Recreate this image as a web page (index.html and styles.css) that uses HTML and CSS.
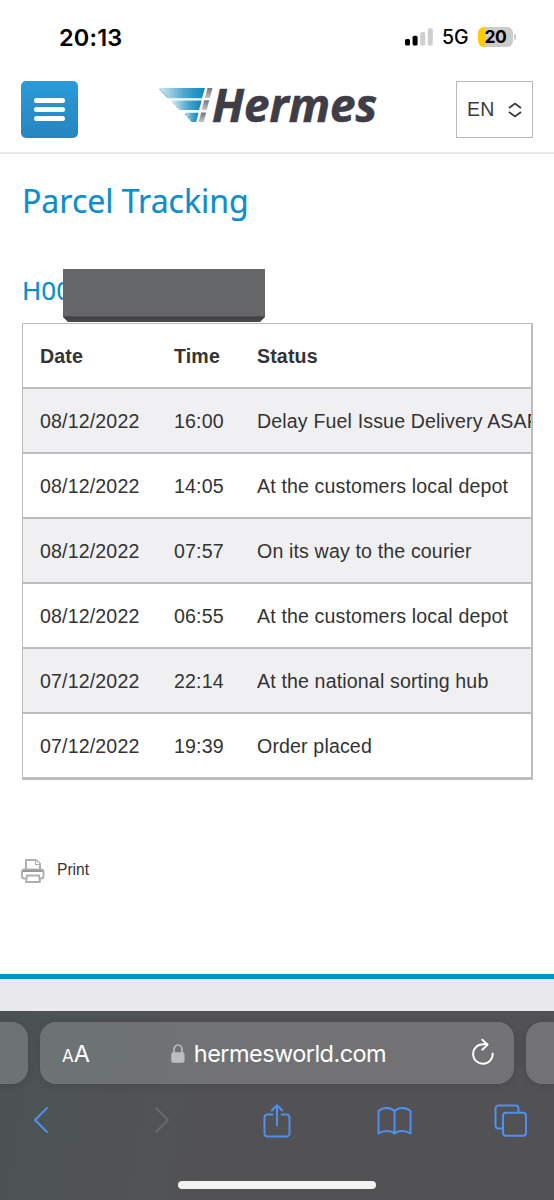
FILE: index.html
```html
<!DOCTYPE html>
<html lang="en">

<head>
    <meta charset="UTF-8">
    <meta name="viewport" content="width=device-width, initial-scale=1.0">
    <title>Parcel Tracking</title>
    <link rel="stylesheet" href="styles.css">
</head>

<body>
    <div class="status-bar">
        <span class="clock">20:13</span>
        <div class="status-right">
            <svg class="signal" width="28" height="18" viewBox="0 0 28 18">
                <rect x="0" y="11" width="5" height="6.5" rx="1.5" fill="#000" />
                <rect x="7.6" y="7.8" width="5" height="9.7" rx="1.5" fill="#000" />
                <rect x="15.2" y="4" width="5" height="13.5" rx="1.5" fill="#cfcfcf" />
                <rect x="22.8" y="0.3" width="5" height="17.2" rx="1.5" fill="#cfcfcf" />
            </svg>
            <span class="network">5G</span>
            <div class="battery"><span>20</span></div>
            <div class="battery-tip"></div>
        </div>
    </div>

    <header class="header">
        <button class="menu-btn" aria-label="Menu">
            <span></span>
            <span></span>
            <span></span>
        </button>
        <svg class="logo" width="224" height="54" viewBox="0 0 224 54">
            <defs>
                <linearGradient id="wing" x1="0" y1="0" x2="1" y2="0">
                    <stop offset="0" stop-color="#d5e9f4" />
                    <stop offset="0.55" stop-color="#4ba6cd" />
                    <stop offset="1" stop-color="#0b88b8" />
                </linearGradient>
                <linearGradient id="bar" x1="0" y1="0" x2="0" y2="1">
                    <stop offset="0" stop-color="#77757c" />
                    <stop offset="1" stop-color="#c4c2c6" />
                </linearGradient>
            </defs>
            <path d="M0 4H46L43 14.2H8.5Z" fill="url(#wing)" />
            <path d="M13 16.5H42.7L40 26H21.5Z" fill="url(#wing)" />
            <path d="M25 28.8H39.5L37.2 38H33Z" fill="url(#wing)" />
            <path d="M0.5 5L8 13.5M13 17.5L21 26M26 30L33 38" stroke="#1c87b3" stroke-width="1" stroke-dasharray="1 1" />
            <path d="M48.5 4H53.5L51 14H46Z" fill="url(#bar)" />
            <path d="M45.2 16.3H50.2L47.8 26H42.8Z" fill="url(#bar)" />
            <path d="M42.2 28.5H47.2L44.6 38H39.6Z" fill="url(#bar)" />
            <text class="logo-text" x="53" y="38" textLength="165" lengthAdjust="spacingAndGlyphs">Hermes</text>
        </svg>
        <div class="lang">
            <span>EN</span>
            <svg width="14" height="16" viewBox="0 0 14 16" fill="none" stroke="#3b3b40" stroke-width="1.9">
                <path d="M1 6L7 1.6L13 6M1 10L7 14.4L13 10" />
            </svg>
        </div>
    </header>

    <main class="content">
        <h1>Parcel Tracking</h1>
        <div class="parcel">
            <h2>H00</h2>
            <div class="redacted"></div>
        </div>

        <table class="events">
            <thead>
                <tr>
                    <th class="date">Date</th>
                    <th class="time">Time</th>
                    <th>Status</th>
                </tr>
            </thead>
            <tbody>
                <tr>
                    <td>08/12/2022</td>
                    <td>16:00</td>
                    <td>Delay Fuel Issue Delivery ASAP</td>
                </tr>
                <tr>
                    <td>08/12/2022</td>
                    <td>14:05</td>
                    <td>At the customers local depot</td>
                </tr>
                <tr>
                    <td>08/12/2022</td>
                    <td>07:57</td>
                    <td>On its way to the courier</td>
                </tr>
                <tr>
                    <td>08/12/2022</td>
                    <td>06:55</td>
                    <td>At the customers local depot</td>
                </tr>
                <tr>
                    <td>07/12/2022</td>
                    <td>22:14</td>
                    <td>At the national sorting hub</td>
                </tr>
                <tr>
                    <td>07/12/2022</td>
                    <td>19:39</td>
                    <td>Order placed</td>
                </tr>
            </tbody>
        </table>

        <a class="print">
            <svg width="24" height="24" viewBox="0 0 24 24" fill="#fff" stroke="#b0b0b0" stroke-width="2" stroke-linejoin="round">
                <path d="M5 11V1H15L19 5V11" />
                <path d="M14.5 1V5.5H19" stroke-width="1.2" />
                <rect x="1" y="10.5" width="21.5" height="9" rx="2.5" />
                <path d="M2 12H21.5" stroke="#999" />
                <path d="M6 16.5H18L19 23H5Z" />
            </svg>
            <span>Print</span>
        </a>
    </main>

    <footer class="footer"></footer>

    <div class="browser">
        <div class="tabs">
            <div class="tab tab-prev"></div>
            <div class="tab address">
                <span class="text-size"><small>A</small>A</span>
                <div class="url">
                    <svg width="14" height="20" viewBox="0 0 14 20">
                        <path d="M3 9V5.5A4 4.5 0 0 1 11 5.5V9" fill="none" stroke="#bcbdc0" stroke-width="1.7" />
                        <rect x="0.3" y="8.3" width="13.2" height="10.5" rx="1.8" fill="#bcbdc0" />
                    </svg>
                    <span>hermesworld.com</span>
                </div>
                <svg class="reload" width="24" height="28" viewBox="0 0 24 28" fill="none" stroke="#fff" stroke-width="1.9" stroke-linecap="round" stroke-linejoin="round">
                    <path d="M21.7 15.5A9.8 9.8 0 1 1 11.9 6.2H16.3" />
                    <path d="M11.3 1.7L16.6 6.6L11.3 11.7" />
                </svg>
            </div>
            <div class="tab tab-next"></div>
        </div>
        <div class="toolbar">
            <svg width="36" height="36" viewBox="-10 -3 36 36"><path d="M14 2L2 14L14 26" /></svg>
            <svg class="disabled" width="36" height="36" viewBox="-13 -3 36 36"><path d="M2 2L14 14L2 26" /></svg>
            <svg width="36" height="36" viewBox="-5 0 36 36">
                <path d="M9.5 11.5H4.5A3 3 0 0 0 1.5 14.5V30.5A3 3 0 0 0 4.5 33.5H23.5A3 3 0 0 0 26.5 30.5V14.5A3 3 0 0 0 23.5 11.5H18.5" />
                <path d="M14 22.5V2.5M8.8 7.5L14 2.2L19.2 7.5" />
            </svg>
            <svg width="36" height="36" viewBox="-1 -3 36 36">
                <path d="M17.5 5C14 1 6 0.8 1.5 5V27.5C6 24 14 24 17.5 27.5C21 24 29 24 33.5 27.5V5C29 0.8 21 1 17.5 5V27.5" />
            </svg>
            <svg width="36" height="36" viewBox="-1 -1 36 36">
                <path d="M8.5 24.5H4.5A3 3 0 0 1 1.5 21.5V4.5A3 3 0 0 1 4.5 1.5H21.5A3 3 0 0 1 24.5 4.5V8.5" />
                <rect x="9" y="8.7" width="23" height="23" rx="3" />
            </svg>
        </div>
        <div class="home-indicator"></div>
    </div>
</body>

</html>
```
FILE: styles.css
```css
* {
    box-sizing: border-box;
    margin: 0;
    padding: 0;
}

body {
    width: 554px;
    height: 1200px;
    display: flex;
    flex-direction: column;
    background-color: #fff;
    color: #333;
    font-family: "Liberation Sans", Arial, sans-serif;
    overflow: hidden;
}

.status-bar {
    height: 74px;
    padding: 0 38px 0 59px;
    display: flex;
    align-items: center;
    justify-content: space-between;
    color: #000;
    font-family: Inter, sans-serif;
}

.clock {
    font-size: 23.5px;
    font-weight: 600;
    letter-spacing: 0.2px;
}

.status-right {
    display: flex;
    align-items: center;
}

.network {
    margin-left: 9px;
    width: 36px;
    font-size: 19.5px;
    font-weight: 500;
}

.battery {
    width: 35px;
    height: 20px;
    border-radius: 6px;
    background: linear-gradient(to right, #fccb0b 7px, #cbcbcb 7px);
    font-size: 17.5px;
    font-weight: 700;
    line-height: 20px;
    letter-spacing: -0.4px;
    text-align: center;
}

.battery-tip {
    width: 2px;
    height: 6px;
    margin-left: 1px;
    border-radius: 0 2px 2px 0;
    background-color: #cbcbcb;
}

.header {
    height: 80px;
    padding: 7px 21px 15px 21px;
    display: flex;
    justify-content: space-between;
    border-bottom: 2px solid #e8e8e8;
}

.menu-btn {
    width: 57px;
    height: 57px;
    display: flex;
    flex-direction: column;
    align-items: center;
    justify-content: center;
    gap: 4px;
    border: none;
    border-radius: 5px;
    background: linear-gradient(#2a9bd9, #2685bf);
}

.menu-btn span {
    width: 31px;
    height: 5px;
    border-radius: 3px;
    background-color: #fff;
}

.logo {
    margin-left: 7px;
    margin-top: 3px;
}

.logo-text {
    fill: #3f3e47;
    stroke: #3f3e47;
    stroke-width: 0.7px;
    font-family: "Open Sans", sans-serif;
    font-size: 47px;
    font-style: italic;
    font-weight: 700;
}

.lang {
    width: 77px;
    height: 57px;
    padding: 0 10px;
    display: flex;
    align-items: center;
    justify-content: space-between;
    border: 1.5px solid #b8b8b8;
    color: #3b3b40;
    font-size: 19.5px;
    letter-spacing: 0.2px;
}

.content {
    flex: 1;
    padding: 26px 21px 0 22px;
}

h1,
h2 {
    color: #0b8ecb;
    font-family: "Noto Sans", sans-serif;
    font-weight: 400;
    -webkit-text-stroke: 0.2px #0b8ecb;
}

h1 {
    height: 89px;
    font-size: 32px;
    line-height: 42px;
}

.parcel {
    height: 54px;
    display: flex;
}

h2 {
    width: 41px;
    font-size: 26px;
    line-height: 42px;
    white-space: nowrap;
    overflow: hidden;
}

.redacted {
    width: 202px;
    height: 53px;
    background: linear-gradient(#656667 0, #656667 47px, #403f42 48px, #4a494d 53px);
    clip-path: polygon(0 0, 100% 0, 100% 48px, 197px 100%, 5px 100%, 0 48px);
}

.events {
    width: 511px;
    table-layout: fixed;
    border-collapse: separate;
    border-spacing: 0;
    border: 1px solid #bdbdbf;
    border-width: 1px 2px 1px 1px;
    overflow: hidden;
    font-size: 19.6px;
    letter-spacing: 0.14px;
}

.events th,
.events td {
    height: 65px;
    padding-left: 17px;
    padding-top: 1px;
    border-bottom: 2px solid #bdbdbf;
    text-align: left;
    white-space: nowrap;
}

.events .date {
    width: 134px;
}

.events .time {
    width: 83px;
}

.events td:nth-child(3) {
    overflow: hidden;
}

.events tbody tr:nth-child(odd) {
    background-color: #f0f0f2;
}

.print {
    margin-top: 79px;
    margin-left: -1px;
    display: flex;
    align-items: center;
    gap: 12px;
    font-size: 15.6px;
}

.print span {
    margin-top: -2px;
}

.footer {
    height: 37px;
    border-top: 5px solid #0092cd;
    background-color: #e9e9eb;
}

.browser {
    height: 189px;
    padding-top: 11px;
    background: linear-gradient(100deg, #4b5254 0, #4e5355 12%, #525254 40%);
}

.tabs {
    display: flex;
    gap: 12px;
}

.tab {
    height: 62px;
    background-color: #727274;
    box-shadow: 0 1px 10px rgba(0, 0, 0, 0.12);
}

.tab-prev {
    width: 28px;
    border-radius: 0 16px 16px 0;
    background-color: #6d7274;
}

.tab-next {
    width: 28px;
    border-radius: 16px 0 0 16px;
}

.address {
    width: 474px;
    padding: 0 19px 0 22px;
    display: flex;
    align-items: center;
    justify-content: space-between;
    border-radius: 16px;
    background: linear-gradient(100deg, #6c7375, #727274 45%);
    color: #fff;
    font-family: Inter, sans-serif;
    font-size: 23.5px;
}

.text-size small {
    font-size: 17px;
}

.url {
    display: flex;
    align-items: center;
    gap: 9px;
    margin-right: 4px;
    padding-top: 1px;
    letter-spacing: -0.55px;
}

.reload {
    margin-top: -2px;
}

.toolbar {
    height: 73px;
    padding: 0 25px 0 23px;
    display: flex;
    align-items: center;
    justify-content: space-between;
}

.toolbar svg {
    fill: none;
    stroke: #4e90ef;
    stroke-width: 2;
    stroke-linecap: round;
    stroke-linejoin: round;
}

.toolbar .disabled {
    stroke: #69696b;
}

.home-indicator {
    width: 198px;
    height: 8px;
    margin: 24px auto 0;
    border-radius: 4px;
    background-color: #f2f2f2;
}
```
